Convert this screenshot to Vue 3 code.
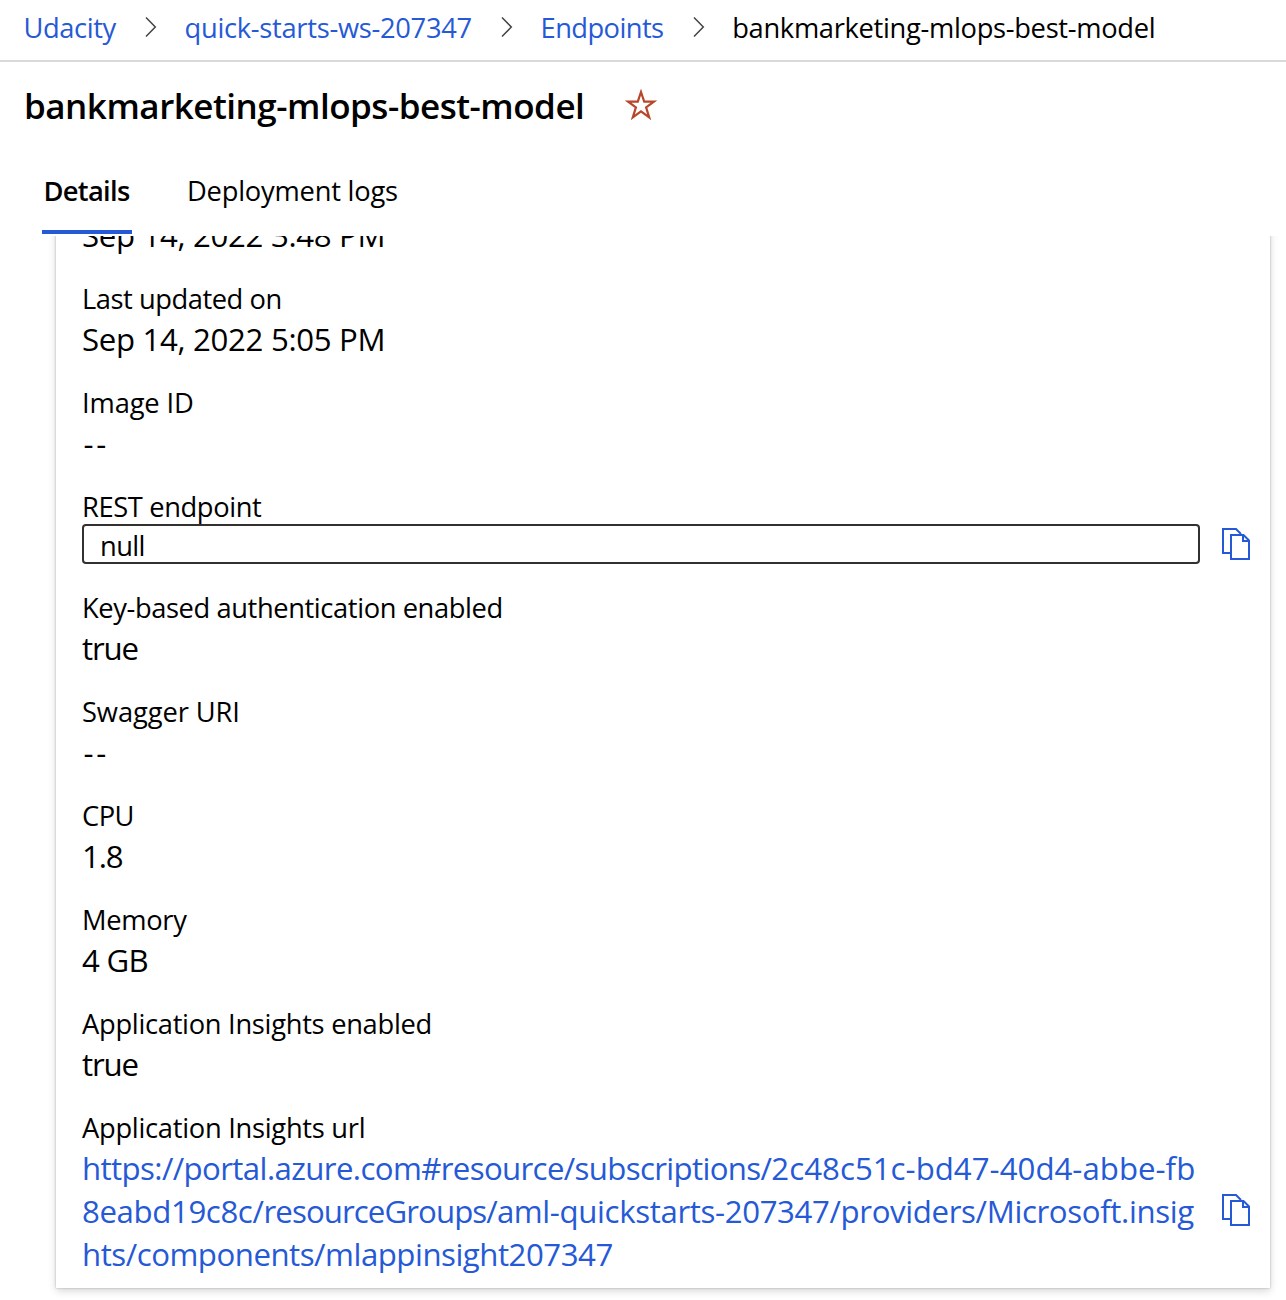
<script setup>
const crumbs = [
  { text: 'Udacity', link: true, track: -0.4 },
  { text: 'quick-starts-ws-207347', link: true, track: -0.29 },
  { text: 'Endpoints', link: true, track: -0.574 },
  { text: 'bankmarketing-mlops-best-model', link: false, track: -0.311 },
]

const url = [
  [
    { text: 'https://portal.azure.com', track: -0.6 },
    { text: '#resource/subscriptions/', track: -0.64 },
    { text: '2c48c51c-bd47-40d4-abbe-fb', track: 0.03 },
  ],
  [
    { text: '8eabd19c8c/', track: -0.38 },
    { text: 'resourceGroups/', track: -0.9 },
    { text: 'aml-quickstarts-207347/providers/Microsoft.insig', track: -0.36 },
  ],
  [{ text: 'hts/components/mlappinsight207347', track: -0.47 }],
]

const fields = [
  { value: 'Sep 14, 2022 3:48 PM', valueTrack: -0.32 },
  { label: 'Last updated on', value: 'Sep 14, 2022 5:05 PM', track: -0.46, valueTrack: -0.32 },
  { label: 'Image ID', value: '--', kind: 'blank', track: -0.132, valueTrack: 2.6 },
  { label: 'REST endpoint', value: 'null', kind: 'input', track: -0.38, valueTrack: -0.6 },
  { label: 'Key-based authentication enabled', value: 'true', track: -0.4, valueTrack: -1.163 },
  { label: 'Swagger URI', value: '--', kind: 'blank', track: -0.1, valueTrack: 2.6 },
  { label: 'CPU', value: '1.8', track: -0.557, valueTrack: -1.2 },
  { label: 'Memory', value: '4 GB', track: -0.3, valueTrack: -0.703 },
  { label: 'Application Insights enabled', value: 'true', track: -0.29, valueTrack: -1.163 },
  { label: 'Application Insights url', kind: 'address', track: -0.28 },
]

const spacing = (px) => ({ letterSpacing: `${px}px` })
</script>

<template>
  <div class="page">
    <nav class="breadcrumb">
      <template v-for="(crumb, i) in crumbs" :key="crumb.text">
        <span v-if="i" class="separator">
          <svg width="12" height="22" viewBox="0 0 12 22"><path d="M1 1.5 10.3 11 1 20.5" /></svg>
        </span>
        <a v-if="crumb.link" class="crumb link" :style="spacing(crumb.track)">{{ crumb.text }}</a>
        <span v-else class="crumb" :style="spacing(crumb.track)">{{ crumb.text }}</span>
      </template>
    </nav>

    <header class="title-row">
      <h1 class="title">bankmarketing-mlops-best-model</h1>
      <svg class="star" width="32" height="32" viewBox="0 0 32 32">
        <path d="M16 3 19.2 12.600H28.900L21.100 18.400 24.200 28.400 16 22.300 7.800 28.400 10.900 18.400 3.100 12.600H12.800Z" />
      </svg>
    </header>

    <div class="tabs">
      <div class="tab active">Details</div>
      <div class="tab">Deployment logs</div>
    </div>

    <main class="scroller">
      <section class="card">
        <div v-for="(field, i) in fields" :key="i" class="field" :class="field.kind">
          <div v-if="field.label" class="label" :style="spacing(field.track)">{{ field.label }}</div>
          <div v-if="field.kind === 'input'" class="row">
            <div class="box" :style="spacing(field.valueTrack)">{{ field.value }}</div>
            <svg class="copy" width="30" height="34" viewBox="0 0 30 34">
              <path d="M9 26H2V2h13l5 5" /><path d="M10 8h12.5L28 13.500V32H10zM22 8v6h6" />
            </svg>
          </div>
          <div v-else-if="field.kind === 'address'" class="row">
            <a class="value link url">
              <span v-for="(line, n) in url" :key="n" class="line"><span v-for="run in line" :key="run.text" :style="spacing(run.track)">{{ run.text }}</span></span>
            </a>
            <svg class="copy" width="30" height="34" viewBox="0 0 30 34">
              <path d="M9 26H2V2h13l5 5" /><path d="M10 8h12.5L28 13.500V32H10zM22 8v6h6" />
            </svg>
          </div>
          <div v-else class="value" :style="spacing(field.valueTrack)">{{ field.value }}</div>
        </div>
      </section>
    </main>
  </div>
</template>

<style>
body {
  background: #fff;
}
</style>

<style scoped>
.page {
  height: 1300px;
  overflow: hidden;
  display: flex;
  flex-direction: column;
  color: #000;
  font-family: "Open Sans", "Noto Sans", sans-serif;
  font-size: 27.3px;
  white-space: nowrap;
}
.breadcrumb {
  box-sizing: border-box;
  flex: none;
  display: flex;
  height: 62px;
  padding-left: 23.5px;
  border-bottom: 2px solid #d9d9d9;
  line-height: 56px;
}
.link {
  color: #2559d6;
}
.separator {
  box-sizing: border-box;
  width: 68.7px;
  height: 54px;
  padding-left: 29.3px;
  display: flex;
  align-items: center;
}
.separator path {
  fill: none;
  stroke: #444;
  stroke-width: 1.5;
}
.title-row {
  flex: none;
  display: flex;
  align-items: center;
  height: 87px;
  padding-left: 24px;
}
.title {
  margin: 0;
  width: 601px;
  font-size: 35px;
  font-weight: 600;
  letter-spacing: -0.49px;
  line-height: 48px;
}
.star {
  margin-bottom: 2px;
  fill: none;
  stroke: #b7472a;
  stroke-width: 2.2;
}
.tabs {
  flex: none;
  display: flex;
  gap: 55px;
  height: 87px;
  padding-left: 42px;
}
.tab {
  box-sizing: border-box;
  height: 85px;
  padding-top: 12px;
  line-height: 60px;
  letter-spacing: -0.222px;
}
.tab.active {
  width: 90px;
  padding-left: 1.5px;
  border-bottom: 4px solid #2559d6;
  font-weight: 600;
  letter-spacing: -0.7px;
}
.scroller {
  flex: 1;
  overflow: hidden;
}
.card {
  box-sizing: border-box;
  width: 1214px;
  margin: -22px 0 0 56px;
  padding: 0 0 12px 26px;
  background: #fff;
  box-shadow: 0 3px 8px rgba(0, 0, 0, 0.16), 0 0 2px rgba(0, 0, 0, 0.26);
}
.field {
  margin-bottom: 23px;
}
.field:last-child {
  margin-bottom: 0;
}
.field.input {
  margin-bottom: 25px;
}
.label {
  line-height: 38px;
}
.value {
  font-size: 31.2px;
  line-height: 43px;
}
.blank .value {
  padding-left: 1.5px;
}
.row {
  display: flex;
  align-items: center;
}
.input .row {
  margin-top: -2px;
}
.box {
  box-sizing: border-box;
  width: 1118px;
  height: 40px;
  padding: 2px 0 0 16px;
  border: 2px solid #323130;
  border-radius: 4px;
  line-height: 36px;
}
.url {
  width: 1118px;
}
.line {
  display: block;
}
.copy {
  flex: none;
  margin-left: 21px;
  fill: none;
  stroke: #2559d6;
  stroke-width: 2;
}
.address .copy {
  margin-bottom: 4px;
}
</style>
